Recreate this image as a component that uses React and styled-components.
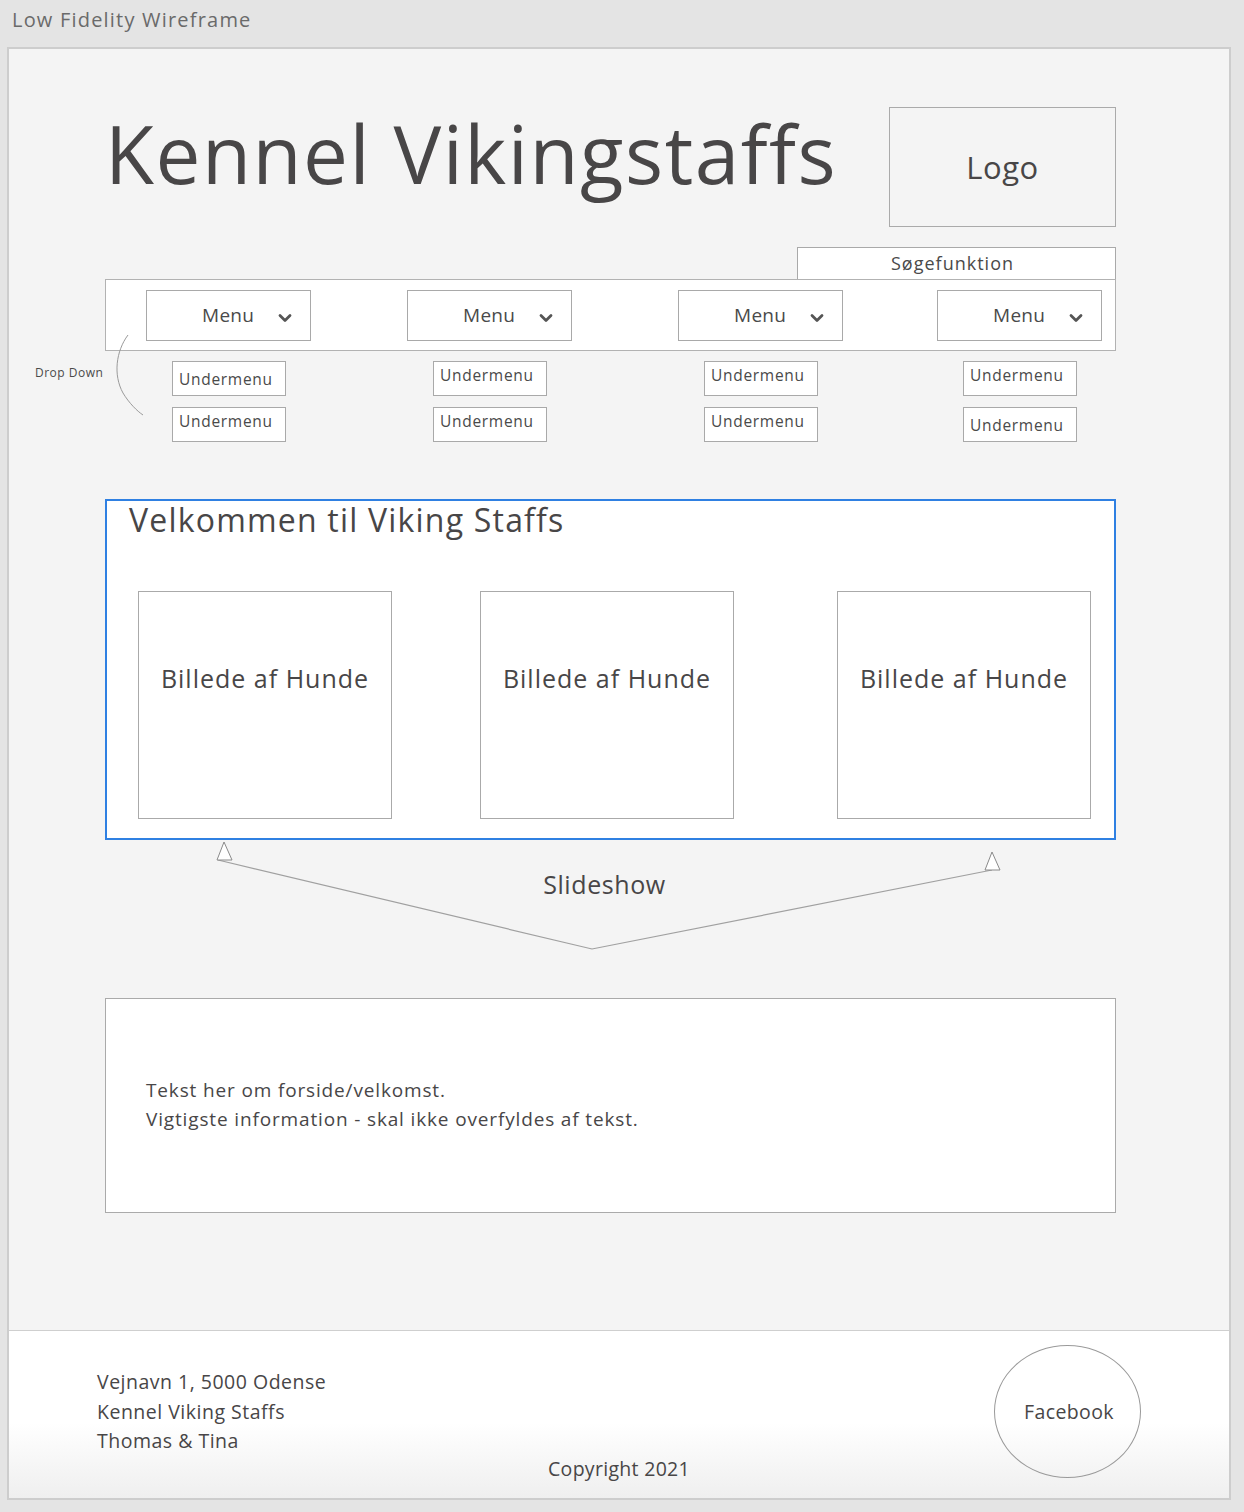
import React from "react";
import styled, { createGlobalStyle } from "styled-components";

const Global = createGlobalStyle`
  html, body { margin: 0; padding: 0; }
  body {
    background: #e4e4e4;
    font-family: "Open Sans", "Liberation Sans", sans-serif;
    color: #4a4a4a;
  }
  * { box-sizing: border-box; }
`;

const TopBar = styled.div`
  height: 47px;
  padding-left: 12px;
  line-height: 40px;
  font-size: 20px;
  color: #6a6a6a;
  letter-spacing: 1.2px;
`;

const Frame = styled.div`
  margin-left: 7px;
  width: 1224px;
  height: 1453px;
  border: 2px solid #cdcdcd;
  background: #f4f4f4;
  display: flex;
  flex-direction: column;
`;

const Main = styled.div`
  padding: 58px 0 0 96px;
  width: 1107px;
`;

const Header = styled.div`
  display: flex;
  align-items: flex-start;
`;

const Title = styled.h1`
  margin: 6px 0 0 0;
  font-weight: 400;
  font-size: 80px;
  line-height: 1;
  color: #484647;
  letter-spacing: 1.5px;
`;

const LogoBox = styled.div`
  margin-left: auto;
  width: 227px;
  height: 120px;
  border: 1px solid #aaa;
  display: flex;
  align-items: center;
  justify-content: center;
  font-size: 31px;
  letter-spacing: 0.5px;
  color: #484647;
`;

const SearchRow = styled.div`
  margin-top: 20px;
  display: flex;
  justify-content: flex-end;
`;

const SearchBox = styled.div`
  width: 319px;
  height: 32px;
  border: 1px solid #a9a9a9;
  border-bottom: none;
  background: #fff;
  text-align: center;
  font-size: 18px;
  line-height: 31px;
  letter-spacing: 1px;
  padding-right: 8px;
  color: #4a4a4a;
`;

const NavArea = styled.div`
  position: relative;
`;

const columns = `
  display: grid;
  grid-template-columns: 261px 271px 259px 165px;
  padding-left: 40px;
`;

const NavBar = styled.div`
  ${columns}
  height: 72px;
  align-items: center;
  background: #fff;
  border: 1px solid #b2b2b2;
`;

const MenuButton = styled.div`
  width: 165px;
  height: 51px;
  border: 1px solid #a9a9a9;
  background: #fff;
  display: flex;
  align-items: center;
  padding-left: 55px;
  gap: 24px;
  font-size: 19px;
  letter-spacing: 0.3px;
  color: #4a4a4a;
`;

const ChevronIcon = styled.svg`
  margin-top: 5px;
`;

const SubGrid = styled.div`
  ${columns}
  padding-left: 41px;
  margin-top: 10px;
`;

const SubColumn = styled.div`
  display: flex;
  flex-direction: column;
  gap: 11px;
  padding-left: 26px;
`;

const SubItem = styled.div`
  width: 114px;
  height: 35px;
  border: 1px solid #a9a9a9;
  background: #fff;
  padding: ${(p) => (p.$low ? "6px" : "2px")} 0 0 6px;
  font-size: 15.5px;
  line-height: 22px;
  letter-spacing: 0.7px;
  color: #4a4a4a;
`;

const DropLabel = styled.div`
  position: absolute;
  left: -70px;
  top: 86px;
  font-size: 12px;
  line-height: 16px;
  letter-spacing: 0.5px;
  color: #4a4a4a;
`;

const DropCurve = styled.svg`
  position: absolute;
  left: 6px;
  top: 54px;
  overflow: visible;
`;

const WelcomeBox = styled.section`
  margin-top: 57px;
  height: 341px;
  border: 2px solid #2f80e2;
  background: #fff;
`;

const WelcomeTitle = styled.h2`
  margin: 0;
  padding-left: 22px;
  font-weight: 400;
  font-size: 32px;
  line-height: 38px;
  letter-spacing: 1.2px;
  color: #484647;
`;

const PictureRow = styled.div`
  margin-top: 52px;
  display: grid;
  grid-template-columns: 342px 357px 254px;
  padding-left: 31px;
`;

const Picture = styled.div`
  width: 254px;
  height: 228px;
  border: 1px solid #aaa;
  background: #fff;
  text-align: center;
  padding-top: 68px;
  font-size: 25px;
  line-height: 36px;
  letter-spacing: 1px;
  color: #484647;
`;

const SlideArea = styled.div`
  position: relative;
  height: 158px;
  padding: 29px 12px 0 0;
  text-align: center;
  font-size: 25px;
  line-height: 30px;
  letter-spacing: 0.6px;
  color: #484647;
`;

const SlideArrows = styled.svg`
  position: absolute;
  left: 0;
  top: 0;
  overflow: visible;
  pointer-events: none;
`;

const TextBox = styled.section`
  height: 215px;
  border: 1px solid #aaa;
  background: #fff;
  padding: 77px 0 0 40px;
  font-size: 19px;
  line-height: 29px;
  letter-spacing: 0.85px;
  color: #484647;
`;

const Footer = styled.footer`
  margin-top: auto;
  height: 168px;
  border-top: 1px solid #cfcfcf;
  background: linear-gradient(#ffffff 55%, #efefef);
  display: grid;
  grid-template-columns: 1fr auto 1fr;
  padding: 0 88px;
`;

const Address = styled.div`
  padding-top: 36px;
  font-size: 19.5px;
  line-height: 29.5px;
  letter-spacing: 0.5px;
  color: #484647;
`;

const Copyright = styled.div`
  align-self: end;
  padding-bottom: 15px;
  font-size: 19.5px;
  line-height: 29px;
  letter-spacing: 0.3px;
  color: #484647;
`;

const Facebook = styled.div`
  justify-self: end;
  margin-top: 14px;
  width: 147px;
  height: 133px;
  border: 1px solid #9a9a9a;
  border-radius: 50%;
  display: flex;
  align-items: center;
  justify-content: center;
  padding-left: 3px;
  font-size: 19.5px;
  letter-spacing: 0.4px;
  color: #484647;
`;

const Chevron = () => (
  <ChevronIcon width="14" height="10" viewBox="0 0 14 10">
    <polyline
      points="2,2.5 7,7.5 12,2.5"
      fill="none"
      stroke="#555"
      strokeWidth="2.8"
      strokeLinecap="round"
      strokeLinejoin="round"
    />
  </ChevronIcon>
);

const subs = [
  [true, false],
  [false, false],
  [false, false],
  [false, true],
];

export default function App() {
  return (
    <>
      <Global />
      <TopBar>Low Fidelity Wireframe</TopBar>
      <Frame>
        <Main>
          <Header>
            <Title>Kennel Vikingstaffs</Title>
            <LogoBox>Logo</LogoBox>
          </Header>
          <SearchRow>
            <SearchBox>Søgefunktion</SearchBox>
          </SearchRow>
          <NavArea>
            <NavBar>
              {[0, 1, 2, 3].map((i) => (
                <MenuButton key={i}>
                  Menu
                  <Chevron />
                </MenuButton>
              ))}
            </NavBar>
            <SubGrid>
              {subs.map((col, i) => (
                <SubColumn key={i}>
                  {col.map((low, j) => (
                    <SubItem key={j} $low={low}>
                      Undermenu
                    </SubItem>
                  ))}
                </SubColumn>
              ))}
            </SubGrid>
            <DropLabel>Drop Down</DropLabel>
            <DropCurve width="40" height="84" viewBox="0 0 40 84">
              <path
                d="M 17 2 C 5 18, 2 42, 12 60 C 18 70, 26 78, 32 82"
                fill="none"
                stroke="#9a9a9a"
                strokeWidth="1"
              />
            </DropCurve>
          </NavArea>
          <WelcomeBox>
            <WelcomeTitle>Velkommen til Viking Staffs</WelcomeTitle>
            <PictureRow>
              <Picture>Billede af Hunde</Picture>
              <Picture>Billede af Hunde</Picture>
              <Picture>Billede af Hunde</Picture>
            </PictureRow>
          </WelcomeBox>
          <SlideArea>
            <SlideArrows width="1011" height="158" viewBox="0 0 1011 158">
              <polyline
                points="113,20 487,109 887,30"
                fill="none"
                stroke="#a0a0a0"
                strokeWidth="1.2"
              />
              <polygon points="119,2 112,20 127,20" fill="#fff" stroke="#8a8a8a" strokeWidth="1" />
              <polygon points="887,12 880,30 895,30" fill="#fff" stroke="#8a8a8a" strokeWidth="1" />
            </SlideArrows>
            Slideshow
          </SlideArea>
          <TextBox>
            Tekst her om forside/velkomst.
            <br />
            Vigtigste information - skal ikke overfyldes af tekst.
          </TextBox>
        </Main>
        <Footer>
          <Address>
            Vejnavn 1, 5000 Odense
            <br />
            Kennel Viking Staffs
            <br />
            Thomas &amp; Tina
          </Address>
          <Copyright>Copyright 2021</Copyright>
          <Facebook>Facebook</Facebook>
        </Footer>
      </Frame>
    </>
  );
}
